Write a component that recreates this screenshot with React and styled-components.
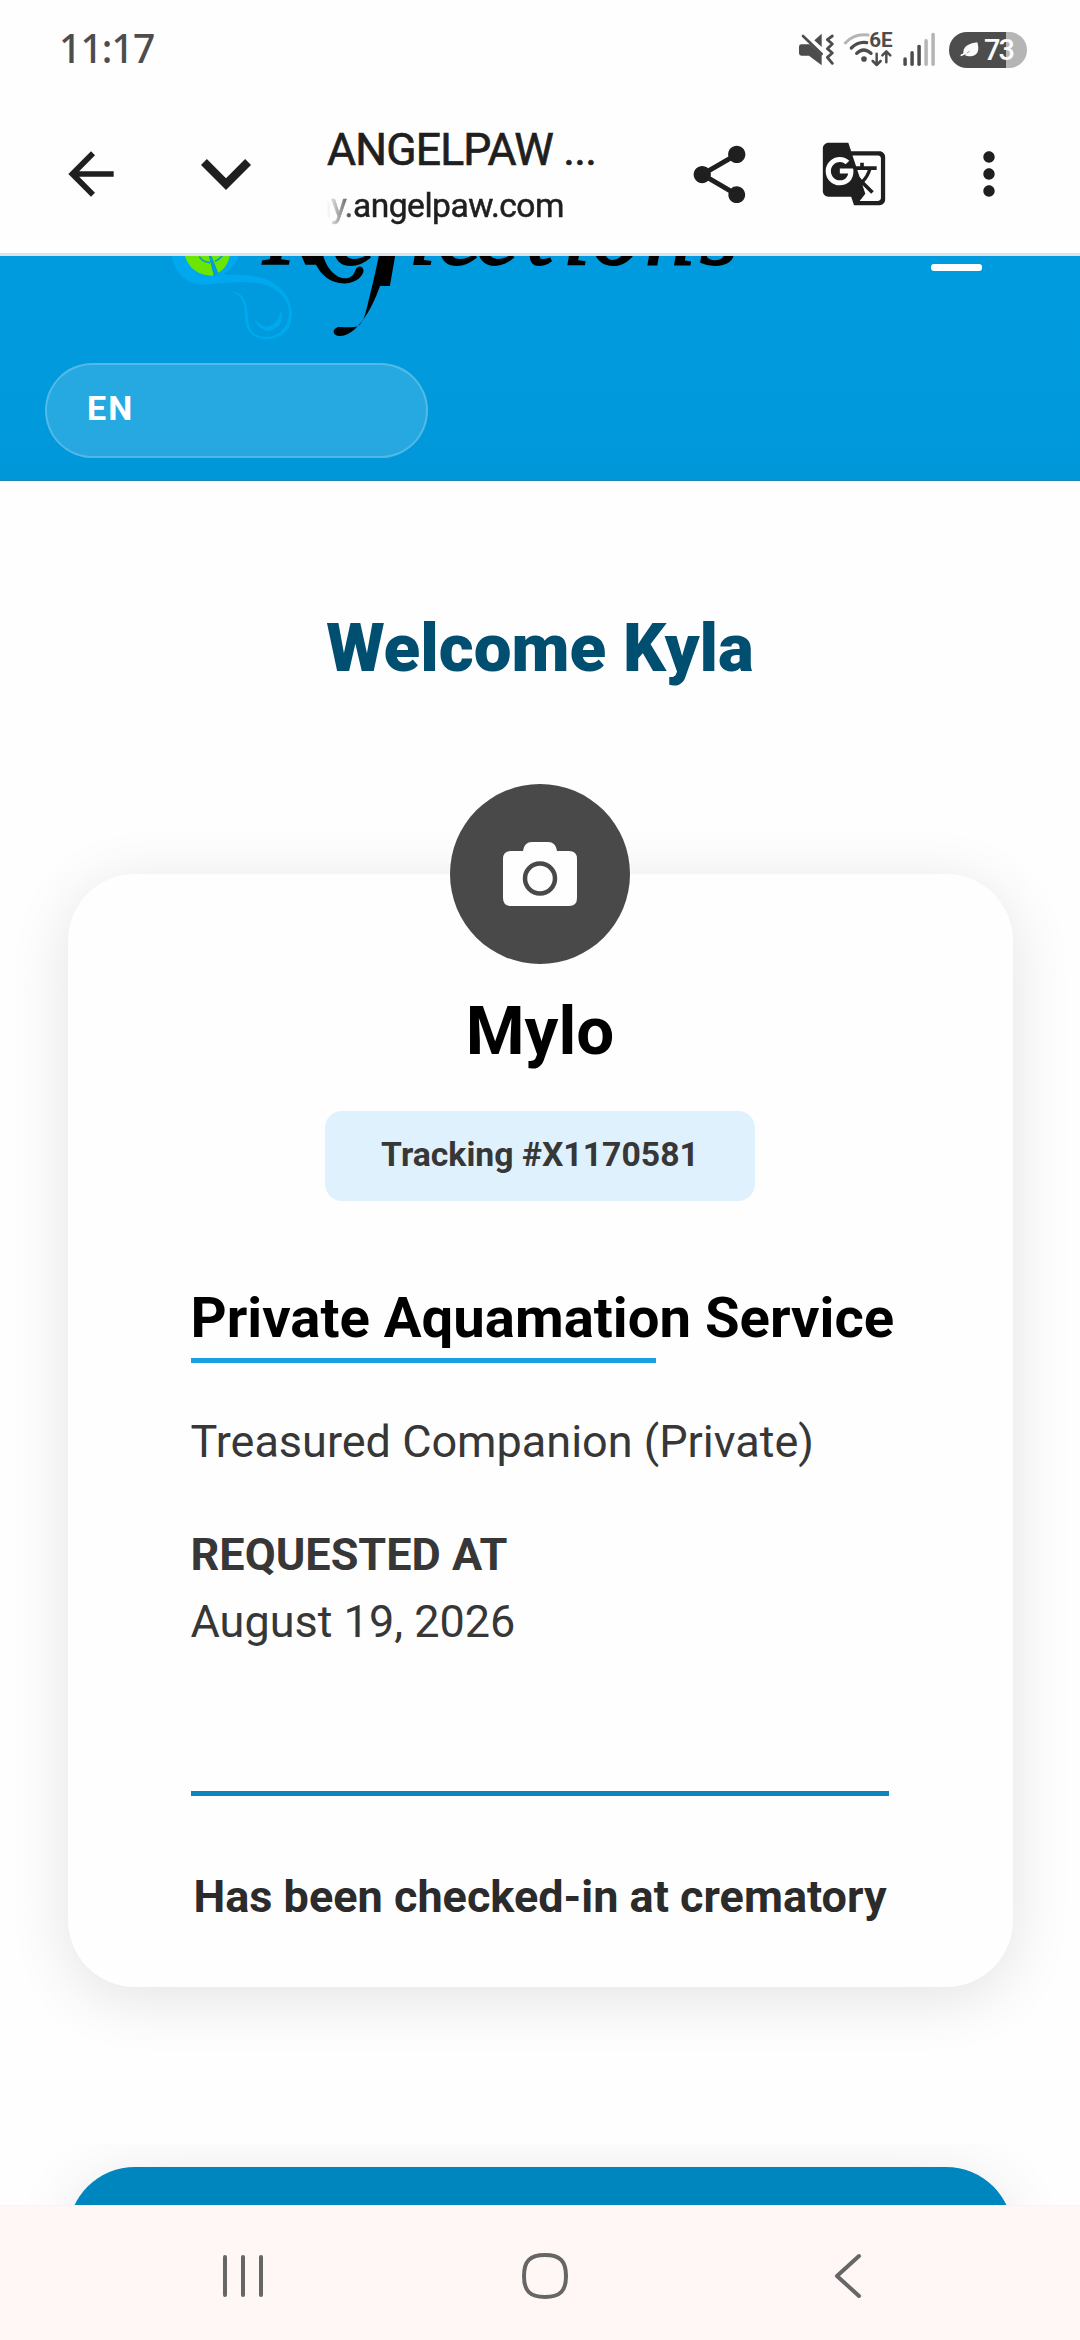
import React from 'react'
import styled, { createGlobalStyle } from 'styled-components';
import { MdArrowBack, MdShare, MdGTranslate, MdMoreVert } from 'react-icons/md';

const GlobalStyle = createGlobalStyle`
    * {
        box-sizing: border-box;
    }

    body {
        margin: 0;
        background: #fefefe;
        font-family: Roboto, sans-serif;
    }

    h1, h2, h3, p {
        margin: 0;
    }

    svg {
        display: block;
        flex-shrink: 0;
    }
`;

const Screen = styled.div`
    width: 1080px;
    height: 2340px;
    display: flex;
    flex-direction: column;
    overflow: hidden;
`;

const StatusBar = styled.div`
    height: 100px;
    padding: 0 53px 0 59px;
    display: flex;
    align-items: center;
    background: #fefefe;
`;

const Clock = styled.span`
    flex: 1;
    font-family: "Noto Sans", sans-serif;
    font-size: 39px;
    font-weight: 500;
    line-height: 100px;
    letter-spacing: -0.9px;
    color: #4d4d4d;
    padding-bottom: 4px;
`;

const StatusIcons = styled.div`
    display: flex;
    align-items: center;
    gap: 8px;
`;

const Battery = styled.div`
    width: 78px;
    height: 36px;
    margin-left: 5px;
    padding-left: 11px;
    border-radius: 18px;
    display: flex;
    align-items: center;
    gap: 5px;
    background: linear-gradient(to right, #4d4d4d 57px, #b5b5b5 57px);
    color: #fafafa;
    font-size: 29px;
    font-weight: 500;
    letter-spacing: -2px;
`;

const Toolbar = styled.div`
    height: 156px;
    padding: 0 57px 5px;
    display: flex;
    align-items: center;
    border-bottom: 3px solid #dce3e9;
    background: #fefefe;
    color: #1f1f1f;
`;

const ToolButton = styled.div`
    width: ${props => props.$width}px;
    display: flex;
    justify-content: center;
    flex-shrink: 0;
    margin-left: ${props => props.$gap || 0}px;
`;

const PageInfo = styled.div`
    width: 281px;
    margin-left: 76px;
    height: 144px;
    white-space: nowrap;
    overflow: hidden;
`;

const PageTitle = styled.div`
    margin-top: 17px;
    font-size: 44.5px;
    line-height: 62px;
    letter-spacing: -0.8px;
    -webkit-text-stroke: 0.7px #1f1f1f;
`;

const PageUrl = styled.div`
    width: 250px;
    font-size: 33.6px;
    line-height: 50px;
    text-indent: -25px;
    letter-spacing: -0.5px;
    -webkit-text-stroke: 0.5px #1f1f1f;
    mask-image: linear-gradient(to right, transparent, #000 30px);
`;

const Header = styled.header`
    height: 225px;
    flex-shrink: 0;
    padding: 0 98px 0 45px;
    background: linear-gradient(#009bdf, #009adc 70%, #0097d9);
    border-bottom: 1px solid #1b85b4;
    overflow: hidden;
`;

const Brand = styled.div`
    height: 107px;
    display: flex;
    justify-content: space-between;
    padding-left: 115px;
`;

const MenuLine = styled.div`
    width: 51px;
    height: 7px;
    margin-top: 8px;
    border-radius: 3px;
    background: #fff;
`;

const Language = styled.div`
    width: 383px;
    height: 95px;
    padding: 0 0 5px 40px;
    display: flex;
    align-items: center;
    border: 2px solid rgba(255, 255, 255, 0.2);
    border-radius: 48px;
    background: rgba(255, 255, 255, 0.15);
    color: #fff;
    font-size: 34px;
    font-weight: 700;
    letter-spacing: 2px;
`;

const Main = styled.main`
    flex: 1;
    min-height: 0;
    overflow: hidden;
    display: flex;
    flex-direction: column;
    align-items: center;
`;

const Welcome = styled.h1`
    margin-top: 127px;
    flex-shrink: 0;
    font-size: 67.3px;
    font-weight: 900;
    line-height: 80px;
    color: #004e70;
`;

const Card = styled.section`
    width: 945px;
    height: 1113px;
    flex-shrink: 0;
    margin-top: 186px;
    padding: 0 123px;
    border-radius: 67px;
    background: #fefefe;
    box-shadow: 0 11px 62px rgba(0, 0, 0, 0.11);
    display: flex;
    flex-direction: column;
    align-items: center;
`;

const Avatar = styled.div`
    width: 180px;
    height: 180px;
    margin-top: -90px;
    flex-shrink: 0;
    border-radius: 50%;
    background: #494949;
    display: flex;
    align-items: center;
    justify-content: center;
`;

const PetName = styled.h2`
    margin-top: 27px;
    font-size: 67.3px;
    font-weight: 700;
    line-height: 80px;
    color: #000;
`;

const Tracking = styled.div`
    width: 430px;
    height: 90px;
    margin-top: 40px;
    padding-bottom: 3px;
    border-radius: 17px;
    background: #e0f1fe;
    display: flex;
    align-items: center;
    justify-content: center;
    font-size: 33.75px;
    font-weight: 700;
    color: #373737;
`;

const Details = styled.div`
    width: 699px;
    white-space: nowrap;
    color: #373737;
    font-size: 45px;
    line-height: 67px;
`;

const ServiceTitle = styled.h3`
    margin-top: 84px;
    font-size: 56.25px;
    font-weight: 700;
    line-height: 66px;
    color: #000;
`;

const Rule = styled.div`
    width: ${props => props.$width};
    height: 5px;
    margin-top: ${props => props.$top}px;
    background: ${props => props.$color};
`;

const Plan = styled.p`
    margin-top: 45px;
`;

const Label = styled.p`
    margin-top: 46px;
    font-weight: 700;
`;

const Status = styled.p`
    margin-top: 71px;
    font-size: 45px;
    font-weight: 700;
    line-height: 60px;
    white-space: nowrap;
    color: #2b2b2b;
`;

const NextSection = styled.div`
    width: 1080px;
    flex: 1;
    min-height: 0;
    margin-top: 157px;
    padding: 23px 67px 0 68px;
    overflow: hidden;
`;

const NextCard = styled.div`
    height: 300px;
    border-radius: 67px;
    background: #0086bf;
    box-shadow: 0 11px 62px rgba(0, 0, 0, 0.1);
`;

const NavBar = styled.nav`
    height: 135px;
    flex-shrink: 0;
    padding: 6px 218px 0 220px;
    display: grid;
    grid-template-columns: 302px 1fr 28px;
    align-items: center;
    border-top: 1px solid #f6f3f2;
    background: #fef7f5;
`;

const MuteIcon = () => (
    <svg width="37" height="36" viewBox="52 66 111 108" fill="#4d4d4d">
        <path d="M62 103h25l36 33v30l-38-29H62q-7 0-7-7v-20q0-7 7-7z" />
        <path d="M101 91l22-20v40z" />
        <path d="M67 78l56 54" stroke="#4d4d4d" strokeWidth="8" strokeLinecap="round" />
        <path d="M155 78l-15 11 15 13-15 14 15 13-15 13 15 18" fill="none" stroke="#4d4d4d" strokeWidth="8.5" strokeLinecap="round" strokeLinejoin="round" />
    </svg>
)

const WifiIcon = () => (
    <svg width="51" height="36" viewBox="188 66 153 108" fill="none" strokeWidth="9" strokeLinecap="round">
        <path d="M195 99q27-30 68-24" stroke="#b5b5b5" />
        <path d="M213 114q20-20 46-16" stroke="#4d4d4d" strokeWidth="10" />
        <path d="M229 130q21-20 43 0" stroke="#4d4d4d" strokeWidth="10" />
        <circle cx="251" cy="147" r="8.5" fill="#4d4d4d" />
        <text x="267" y="111" fontFamily="Roboto, sans-serif" fontWeight="700" fontSize="58" fill="#4d4d4d" textLength="70" lengthAdjust="spacingAndGlyphs">6E</text>
        <path d="M289 131v33m-12-11l12 12 12-12M318 157v-32m-12 11l12-12 12 12" stroke="#4d4d4d" strokeWidth="7.5" strokeLinejoin="round" />
    </svg>
)

const bars = [142, 123, 104, 87, 68]

const SignalIcon = () => (
    <svg width="34" height="36" viewBox="364 66 102 108">
        {bars.map((top, i) => (
            <rect key={top} x={368 + i * 21} y={top} width="10.5" height={168 - top} rx="5" fill={i < 3 ? "#4d4d4d" : "#b5b5b5"} />
        ))}
    </svg>
)

const LeafIcon = () => (
    <svg width="19" height="18" viewBox="536 94 57 54" fill="#fafafa">
        <path d="M588 98c7 22 2 42-20 42-8 0-14-2-18-4l18-13-22 10c-2-24 18-32 42-35z" />
        <path d="M540 137l16-8" stroke="#fafafa" strokeWidth="5" strokeLinecap="round" />
    </svg>
)

const Logo = () => (
    <svg width="600" height="90" viewBox="160 256 600 90">
        <g transform="translate(160 250) scale(0.3333)">
            <path fill="#00a9ef" d="M35 18C45 70 80 106 140 104C200 100 270 88 320 105C370 125 388 160 387 190C385 240 350 261 318 261C275 259 266 235 264 205C262 160 255 125 212 126C245 130 252 160 254 185C254 225 262 264 318 268C365 268 396 240 396 190C394 140 355 85 270 77C235 73 210 76 190 72C220 55 230 35 236 18Z" />
            <path fill="#00a9ef" d="M284 207Q300 228 322 230Q352 225 364 182Q375 235 322 243Q290 235 284 207Z" />
            <path fill="#6be600" d="M75 18C85 50 110 77 158 77L175 68C193 58 205 40 209 18Z" />
            <path fill="none" stroke="#009cdf" strokeWidth="5" d="M118 20Q128 36 150 38M188 16Q176 30 165 34" />
            <path fill="#009cdf" d="M146 16L162 80L175 70L154 16Z" />
        </g>
        <text y="264" x="263 332 380 409 438 476 526 563 592 645 700" fontFamily="Liberation Serif, serif" fontStyle="italic" fontSize="98" stroke="#000" strokeWidth="2">Reflections</text>
        {/* flourishes under the wordmark */}
        <path d="M312 255C318 273 328 283 345 283.500C358 283 364 274 363.500 270C362 265 357 266 355.500 270C353 277 349 279 342 278C332 275 326 266 323 255Z" />
        <path d="M379 255C376 270 372 287 368 303C365 315 363 327 354 327C348 328 343 326.500 338 327C332 329 332 335 339 336C350 337 360 325 367 314C377 298 383 278 390 255Z" />
    </svg>
)

const CameraIcon = () => (
    <svg width="74" height="64" viewBox="0 0 74 64">
        <path fill="#fefefe" d="M8 9H20C21 3 24 0 29 0H45C50 0 53 3 54 9H66Q74 9 74 17V56Q74 64 66 64H8Q0 64 0 56V17Q0 9 8 9Z" />
        <circle cx="37" cy="36.5" r="15" fill="none" stroke="#494949" strokeWidth="4.5" />
    </svg>
)

const App = () => {
    return (
        <Screen>
            <GlobalStyle />
            <StatusBar>
                <Clock>11:17</Clock>
                <StatusIcons>
                    <MuteIcon />
                    <WifiIcon />
                    <SignalIcon />
                    <Battery>
                        <LeafIcon />
                        73
                    </Battery>
                </StatusIcons>
            </StatusBar>

            <Toolbar>
                <ToolButton $width={68}>
                    <MdArrowBack size={68} />
                </ToolButton>
                <ToolButton $width={50} $gap={76}>
                    <svg width="50" height="31" viewBox="6 8.59 12 7.41" fill="#1f1f1f">
                        <path d="M7.41 8.59L12 13.17l4.59-4.58L18 10l-6 6-6-6z" />
                    </svg>
                </ToolButton>
                <PageInfo>
                    <PageTitle>ANGELPAW ...</PageTitle>
                    <PageUrl>my.angelpaw.com</PageUrl>
                </PageInfo>
                <ToolButton $width={69} $gap={78}>
                    <MdShare size={69} />
                </ToolButton>
                <ToolButton $width={75} $gap={62}>
                    <MdGTranslate size={68} />
                </ToolButton>
                <ToolButton $width={68} $gap={64}>
                    <MdMoreVert size={68} />
                </ToolButton>
            </Toolbar>

            <Header>
                <Brand>
                    <Logo />
                    <MenuLine />
                </Brand>
                <Language>EN</Language>
            </Header>

            <Main>
                <Welcome>Welcome Kyla</Welcome>
                <Card>
                    <Avatar>
                        <CameraIcon />
                    </Avatar>
                    <PetName>Mylo</PetName>
                    <Tracking>Tracking #X1170581</Tracking>
                    <Details>
                        <ServiceTitle>Private Aquamation Service</ServiceTitle>
                        <Rule $width="465px" $top={7} $color="#1a9fe0" />
                        <Plan>Treasured Companion (Private)</Plan>
                        <Label>REQUESTED AT</Label>
                        <p>August 19, 2026</p>
                        <Rule $width="698px" $top={136} $color="#0a86bf" />
                    </Details>
                    <Status>Has been checked-in at crematory</Status>
                </Card>
                <NextSection>
                    <NextCard />
                </NextSection>
            </Main>

            <NavBar>
                <svg width="46" height="46" viewBox="0 0 46 46" stroke="#666" strokeWidth="4" strokeLinecap="round">
                    <path d="M5 4v38M23 4v38M41 4v38" />
                </svg>
                <svg width="46" height="46" viewBox="0 0 46 46" fill="none" stroke="#666" strokeWidth="4">
                    <path d="M23 2C38 2 44 8 44 23C44 38 38 44 23 44C8 44 2 38 2 23C2 8 8 2 23 2Z" />
                </svg>
                <svg width="28" height="46" viewBox="0 0 28 46" fill="none" stroke="#666" strokeWidth="4" strokeLinecap="round" strokeLinejoin="round">
                    <path d="M25 3L3 23L25 43" />
                </svg>
            </NavBar>
        </Screen>
    )
}

export default App
